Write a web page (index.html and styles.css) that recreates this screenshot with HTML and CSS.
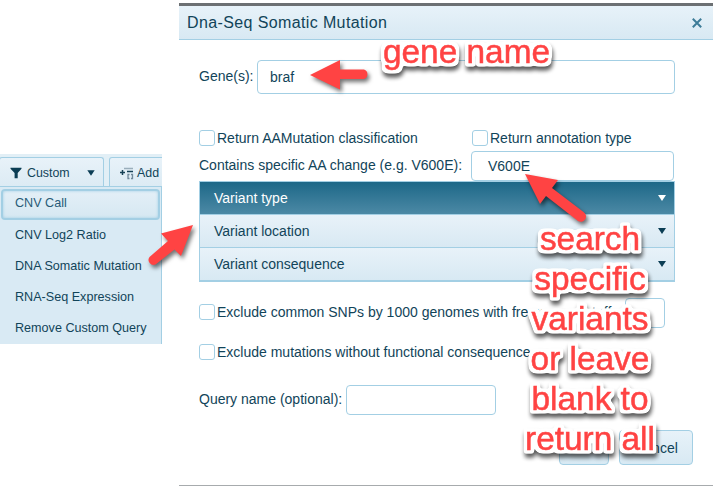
FILE: index.html
```html
<!DOCTYPE html>
<html lang="en">
<head>
<meta charset="utf-8">
<title>Dna-Seq Somatic Mutation</title>
<link rel="stylesheet" href="styles.css">
</head>
<body>
<div class="page">
  <aside class="side">
    <div class="tabs">
      <div class="tab tab-custom">
        <svg width="12" height="12" viewBox="0 0 12 12"><path d="M.5.8h11v1L7.700 6v5.300H4.600V6L.5 1.800z"/></svg>
        <span>Custom</span>
        <svg class="caret" width="8" height="6" viewBox="0 0 8 6"><path d="M.3.3h7.400L4 5.800z"/></svg>
      </div>
      <div class="tab tab-add">
        <svg width="14" height="13" viewBox="0 0 14 13"><path d="M4 1.500h9" stroke="#9aaebb" stroke-width="1.500"/><path d="M7 4.500h6M0 5.500h5M2.500 3v5" fill="none" stroke="#174156" stroke-width="1.500"/><path d="M9.500 7.500H8v4h1.500M11 7.500h1.500v4H11" fill="none" stroke="#71899a" stroke-width="1.300"/></svg>
        <span>Add</span>
      </div>
    </div>
    <ul class="menu">
      <li class="active">CNV Call</li>
      <li>CNV Log2 Ratio</li>
      <li>DNA Somatic Mutation</li>
      <li>RNA-Seq Expression</li>
      <li>Remove Custom Query</li>
    </ul>
  </aside>
  <main class="dialog">
    <header class="title"><span>Dna-Seq Somatic Mutation</span>
      <svg width="10" height="10" viewBox="0 0 10 10"><path d="M.8.8l8.400 8.400M9.200.8L.8 9.200" stroke="#3d7c98" stroke-width="2"/></svg>
    </header>
    <div class="form">
      <div class="row gene"><label>Gene(s):</label><div class="input">braf</div></div>
      <div class="row returns">
        <div class="check"><i class="box"></i>Return AAMutation classification</div>
        <div class="check"><i class="box"></i>Return annotation type</div>
      </div>
      <div class="row change"><label>Contains specific AA change (e.g. V600E):</label><div class="input">V600E</div></div>
      <div class="accordion">
        <div class="item open">Variant type<svg class="caret" width="8" height="6" viewBox="0 0 8 6"><path d="M0 0h8L4 6z"/></svg></div>
        <div class="item">Variant location<svg class="caret" width="8" height="6" viewBox="0 0 8 6"><path d="M0 0h8L4 6z"/></svg></div>
        <div class="item">Variant consequence<svg class="caret" width="8" height="6" viewBox="0 0 8 6"><path d="M0 0h8L4 6z"/></svg></div>
      </div>
      <div class="row snps"><div class="check"><i class="box"></i>Exclude common SNPs by 1000 genomes with frequency cutoff:</div><div class="input"></div></div>
      <div class="row functional"><div class="check"><i class="box"></i>Exclude mutations without functional consequence</div></div>
      <div class="row query"><label>Query name (optional):</label><div class="input"></div></div>
    </div>
    <footer class="actions"><div class="button ok">OK</div><div class="button cancel">Cancel</div></footer>
  </main>
</div>
<svg class="notes" width="713" height="499" viewBox="0 0 713 499">
  <defs>
    <filter id="halo" filterUnits="userSpaceOnUse" x="0" y="0" width="713" height="499" color-interpolation-filters="sRGB">
      <feMorphology in="SourceAlpha" operator="dilate" radius="3" result="wide"/>
      <feGaussianBlur in="wide" stdDeviation="1.300"/>
      <feComponentTransfer result="edge"><feFuncA type="linear" slope="4" intercept="-1"/></feComponentTransfer>
      <feFlood flood-color="#fff"/>
      <feComposite in2="edge" operator="in" result="white"/>
      <feGaussianBlur in="edge" stdDeviation="2"/>
      <feOffset dx="1" dy="4"/>
      <feComponentTransfer result="shade"><feFuncA type="linear" slope="0.650"/></feComponentTransfer>
      <feMerge><feMergeNode in="shade"/><feMergeNode in="white"/><feMergeNode in="SourceGraphic"/></feMerge>
    </filter>
  </defs>
  <g class="arrows">
    <path d="M310 75L340 60V69.500H364A5 5 0 0 1 364 79H340V89.500Z"/>
    <path d="M193 225L181 256L174.500 249.500L155.500 264.500A5 5 0 0 1 149.500 257L168 241L161 233.500Z"/>
    <path d="M525 174L558 180L552 188L583.500 212A5 5 0 0 1 578 221L546 196L540 204Z"/>
  </g>
  <g class="callout" text-anchor="middle">
    <text x="466.500" y="63">gene name</text>
    <text x="590" y="250">search</text>
    <text x="590" y="290">specific</text>
    <text x="590" y="330">variants</text>
    <text x="590" y="370">or leave</text>
    <text x="590" y="410">blank to</text>
    <text x="590" y="450">return all</text>
  </g>
</svg>
</body>
</html>
```

FILE: styles.css
```css
* { box-sizing: border-box; }
body {
  margin: 0;
  background: #fff;
  color: #114459;
  font: 14px/16px "Liberation Sans", Arial, sans-serif;
}
.page { display: flex; width: 713px; height: 499px; overflow: hidden; }

.side { width: 162px; height: 190px; margin: 154px 17px 0 0; background: #d9eaf4; font-size: 12.6px; overflow: hidden; flex: none; }
.tabs { display: flex; gap: 5px; height: 32px; padding-top: 3px; background: #e2eff6; }
.tab { display: flex; align-items: center; height: 29px; flex: none; border: 1px solid #a3cfe4; border-bottom: 0; border-radius: 3px 3px 0 0; background: linear-gradient(#e8f2f9, #dcebf4); padding-top: 2px; }
.tab svg { fill: #0b3d54; flex: none; }
.tab-custom { width: 105px; margin-left: -1px; padding-left: 10px; font-size: 12.4px; }
.tab-custom span { margin-left: 5px; }
.tab-custom .caret { margin-left: 17px; }
.tab-add { width: 70px; padding-left: 10px; gap: 3px; font-size: 12.4px; }
.menu { height: 158px; margin: 0; padding: 2px 1px 0; list-style: none; border: 1px solid #a3cfe4; border-width: 1px 1px 0 0; }
.menu li { height: 31px; padding: 0 14px; line-height: 30px; white-space: nowrap; }
.menu .active { border: 2px solid #a3cfe4; border-radius: 4px; padding: 0 12px; line-height: 25px; background: linear-gradient(#e3eff7, #d6e8f2); box-shadow: inset 0 0 3px #a3cfe4; color: #285b78; }

.dialog { display: flex; flex-direction: column; width: 534px; height: 483px; margin-top: 3px; border-top: 3px solid #6c7073; border-bottom: 1px solid #a7abad; flex: none; }
.title { display: flex; justify-content: space-between; align-items: center; height: 34px; padding: 0 11px 0 8px; border-bottom: 1px solid #a3cfe4; background: linear-gradient(#e7f2f9, #d8e9f3); font-size: 16px; letter-spacing: .38px; }
.form { padding: 20px 0 0 20px; }
.row { display: flex; align-items: center; white-space: nowrap; }
.input { height: 30px; border: 1px solid #a3cfe4; border-radius: 4px; background: #fff; flex: none; }
.gene { height: 34px; }
.gene .input { width: 418px; height: 34px; margin-left: 4px; padding-left: 12px; line-height: 33px; font-size: 14px; }
.gene label { width: 54px; margin-top: -2px; }
.returns { height: 16px; margin-top: 36px; }
.check { display: flex; align-items: center; gap: 2px; }
.returns .check:first-child { width: 273px; }
.box { width: 16px; height: 16px; border: 1px solid #a3cfe4; border-radius: 3px; flex: none; }
.change { height: 30px; margin-top: 5px; }
.change label { width: 272px; margin-top: -2px; }
.change .input { width: 203px; padding-left: 16px; line-height: 29px; }
.accordion { width: 476px; border: 1px solid #a3cfe4; }
.item { display: flex; justify-content: space-between; align-items: center; height: 33px; padding: 0 8px 0 14px; border-bottom: 1px solid #a3cfe4; background: linear-gradient(#e8f2f9, #d8e9f3); }
.item .caret { fill: #0b3d54; }
.open { background: linear-gradient(#1d6888, #4c89a5); color: #fff; }
.item.open .caret { fill: #fff; }
.snps { height: 30px; margin-top: 16px; }
.snps .check { width: 426px; margin-top: -2px; }
.snps .input { width: 40px; }
.functional { height: 16px; margin-top: 16px; }
.query { height: 30px; margin-top: 25px; }
.query label { width: 147px; margin-top: -2px; }
.query .input { width: 150px; }
.actions { display: flex; justify-content: flex-end; gap: 10px; padding: 15px 20px 0 0; }
.button { height: 35px; border: 1px solid #a3cfe4; border-radius: 4px; background: linear-gradient(#e7f2f9, #d8e9f3); text-align: center; line-height: 35px; }
.ok { width: 50px; }
.cancel { width: 74px; }

.notes { position: absolute; left: 0; top: 0; pointer-events: none; }
.arrows { fill: #ff4343; filter: drop-shadow(2px 3px 2px rgba(0, 0, 0, .55)); }
.callout { font: 33.400px "Liberation Sans", Arial, sans-serif; fill: #ff4343; stroke: #ff4343; stroke-width: .5px; filter: url(#halo); }
```
